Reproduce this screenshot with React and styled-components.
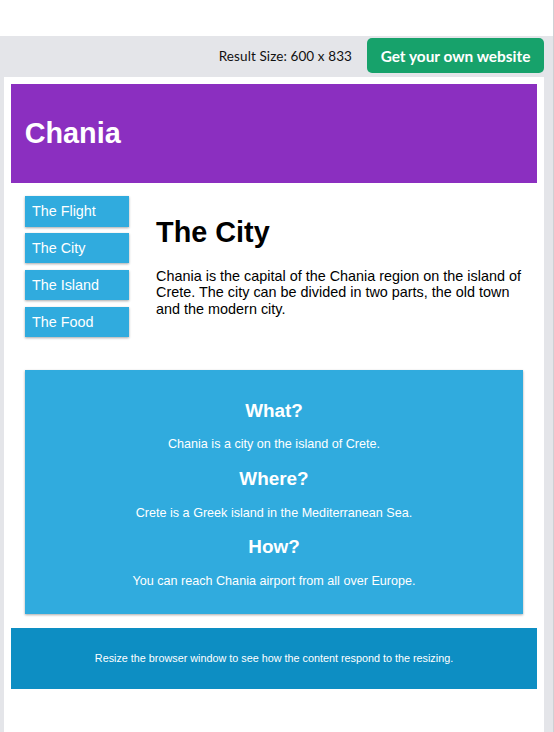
import React from 'react';
import styled, { createGlobalStyle } from 'styled-components';

const GlobalStyle = createGlobalStyle`
  html, body {
    margin: 0;
    padding: 0;
    height: 100%;
    overflow: hidden;
  }
  #root { height: 100%; }
  * { box-sizing: border-box; }
`;

const colors = {
  gray: '#e4e5e9',
  green: '#17a26b',
  purple: '#8b2fc0',
  blue: '#30abde',
  darkBlue: '#0d8ec3',
  white: '#ffffff',
};

const sans = `"Liberation Sans", Arial, Helvetica, sans-serif`;

// --- editor chrome --- //
const Page = styled.div`
  height: 100%;
  display: flex;
  flex-direction: column;
  background: ${colors.gray};
  border-right: 1px solid #cfd0d4;
`;

const TopStrip = styled.div`
  height: 36px;
  flex: none;
  background: ${colors.white};
`;

const ResultBar = styled.div`
  height: 41px;
  flex: none;
  display: flex;
  align-items: center;
  justify-content: flex-end;
  gap: 15px;
  padding: 0 9px 2px 0;
`;

const ResultSize = styled.span`
  font-family: Lato, "Open Sans", sans-serif;
  font-size: 13.5px;
  color: #111;
  letter-spacing: 0.1px;
`;

const OwnSiteButton = styled.a`
  display: flex;
  align-items: center;
  justify-content: center;
  width: 177px;
  height: 35px;
  border-radius: 5px;
  background: ${colors.green};
  color: ${colors.white};
  font-family: Lato, "Open Sans", sans-serif;
  font-weight: 700;
  font-size: 15.4px;
  text-decoration: none;
  cursor: pointer;
`;

const FrameWrap = styled.div`
  flex: 1;
  display: flex;
  padding: 0 9px 0 4px;
  min-height: 0;
`;

const Frame = styled.div`
  flex: 1;
  background: ${colors.white};
  padding: 7.2px;
  font-family: ${sans};
  overflow: hidden;
`;

// --- result page --- //
const Header = styled.header`
  background: ${colors.purple};
  color: ${colors.white};
  padding: 13.5px;

  h1 {
    margin: 19.3px 0;
    font-size: 28.8px;
    line-height: 33px;
  }
`;

const Row = styled.div`
  display: flex;
  flex-wrap: wrap;
`;

const Col = styled.div`
  width: ${({ $span }) => ($span / 12) * 100}%;
  padding: 13.5px;
`;

const Menu = styled.ul`
  list-style: none;
  margin: 0;
  padding: 0;
`;

const MenuItem = styled.li`
  padding: 7.2px;
  margin-bottom: 6.4px;
  background: ${colors.blue};
  color: ${colors.white};
  font-size: 14.4px;
  line-height: 16px;
  box-shadow: 0 1px 3px rgba(0, 0, 0, 0.12), 0 1px 2px rgba(0, 0, 0, 0.24);
`;

const Title = styled.h1`
  margin: 19.3px 0;
  font-size: 28.8px;
  line-height: 33px;
  color: #000;
`;

const Text = styled.p`
  margin: 14.4px 0;
  font-size: 14.4px;
  line-height: 16.5px;
  color: #000;
`;

const Aside = styled.div`
  background: ${colors.blue};
  color: ${colors.white};
  padding: 13.5px;
  text-align: center;
  font-size: 12.6px;
  box-shadow: 0 1px 3px rgba(0, 0, 0, 0.12), 0 1px 2px rgba(0, 0, 0, 0.24);

  h2 {
    margin: 15.7px 0;
    font-size: 18.9px;
    line-height: 22.2px;
  }

  p {
    margin: 12.6px 0;
    line-height: 14.6px;
  }
`;

const Footer = styled.footer`
  background: ${colors.darkBlue};
  color: ${colors.white};
  text-align: center;
  font-size: 10.8px;
  padding: 13.5px;

  p {
    margin: 10.8px 0;
    line-height: 12.4px;
  }
`;

const menu = ['The Flight', 'The City', 'The Island', 'The Food'];

const facts = [
  { q: 'What?', a: 'Chania is a city on the island of Crete.' },
  { q: 'Where?', a: 'Crete is a Greek island in the Mediterranean Sea.' },
  { q: 'How?', a: 'You can reach Chania airport from all over Europe.' },
];

export default function App() {
  return (
    <>
      <GlobalStyle />
      <Page>
        <TopStrip />
        <ResultBar>
          <ResultSize>Result Size: 600 x 833</ResultSize>
          <OwnSiteButton>Get your own website</OwnSiteButton>
        </ResultBar>
        <FrameWrap>
          <Frame>
            <Header>
              <h1>Chania</h1>
            </Header>
            <Row>
              <Col $span={3}>
                <Menu>
                  {menu.map((m) => (
                    <MenuItem key={m}>{m}</MenuItem>
                  ))}
                </Menu>
              </Col>
              <Col $span={9}>
                <Title>The City</Title>
                <Text>
                  Chania is the capital of the Chania region on the island of Crete. The city can be
                  divided in two parts, the old town and the modern city.
                </Text>
              </Col>
              <Col $span={12}>
                <Aside>
                  {facts.map((f) => (
                    <React.Fragment key={f.q}>
                      <h2>{f.q}</h2>
                      <p>{f.a}</p>
                    </React.Fragment>
                  ))}
                </Aside>
              </Col>
            </Row>
            <Footer>
              <p>Resize the browser window to see how the content respond to the resizing.</p>
            </Footer>
          </Frame>
        </FrameWrap>
      </Page>
    </>
  );
}
